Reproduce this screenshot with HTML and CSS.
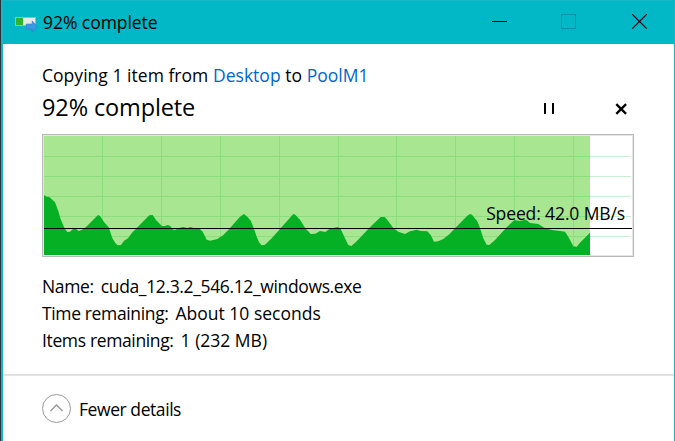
FILE: index.html
```
<!DOCTYPE html>
<html lang="en">
<head>
<meta charset="utf-8">
<title>92% complete</title>
<link rel="stylesheet" href="styles.css">
</head>
<body>
<div class="window">
  <header class="titlebar">
    <svg class="app-icon" width="23" height="18" viewBox="0 0 23 18">
      <rect x=".5" y="2.500" width="20" height="8" fill="#e8e8e8" stroke="#a9b5b5"/>
      <rect x="1" y="3" width="7" height="7" fill="#2db52e"/>
      <path d="M11.300 9h5.900V6l5.500 5.700-5.500 5.700V14h-5.900z" fill="#3c96e4" stroke="#2c80d2" stroke-width=".6"/>
    </svg>
    <span class="title">92% complete</span>
    <svg class="controls" width="156" height="16" viewBox="0 0 156 16" fill="none" stroke="#000">
      <path d="M0 7.500h15"/>
      <rect x="69.500" y=".5" width="14" height="14" stroke="#0094a3"/>
      <path d="M140.300.300l14.400 14.400M154.700.300l-14.400 14.400" stroke-width="1.150"/>
    </svg>
  </header>
  <main class="body">
    <p class="source">Copying 1 item from <a>Desktop</a> to <a>PoolM1</a></p>
    <div class="status">
      <h1>92% complete</h1>
      <svg class="actions" width="83" height="12" viewBox="0 0 83 12" stroke="#000" fill="none">
        <path d="M1 0v11M9 0v11" stroke-width="2"/>
        <path d="M72.300 1.100l9.800 9.800M82.100 1.100l-9.800 9.800" stroke-width="2.300"/>
      </svg>
    </div>
    <div class="chart">
      <svg width="588" height="119" viewBox="44 136 588 119">
        <path d="M590 156.500h41M590 176.500h41M590 196.500h41M590 216.500h41M590 236.500h41" stroke="#c9f0d3"/>
        <rect x="44" y="136" width="546" height="119" fill="#a8e692"/>
        <path d="M44 156.500h546M44 176.500h546M44 196.500h546M44 216.500h546M44 236.500h546M102.500 136v119M161.500 136v119M220.500 136v119M279.500 136v119M338.500 136v119M396.500 136v119M455.500 136v119M514.500 136v119M573.500 136v119" stroke="#8ade7c"/>
        <path fill="#06b025" d="M44 255V195L46.700 196.700 49.300 197 55 202.300 58.300 211 60.700 219.300 64.300 227.700 67.300 232 70 231.700 72.700 229.300 76 228.700 78.700 231 82 229.700 86 227 98 215 100 216 104 222 108.700 227.300 112.300 238 115.300 243 117.700 245.300 121 245 124 240.700 128 238.300 132 232.700 136.700 228 149.300 215.300 152.700 215 156 220 162 226 165 226 167.300 225 170 225.700 173.300 229.700 175.700 229.700 178 228.300 183.300 227 187.300 228 190.700 227 194 228.300 200 229 202.700 231.700 206.700 239.700 210 240.700 217.300 239 223.300 235 228.300 230 240 216.700 244 214 247.300 216.700 250.700 220.700 253.300 226.700 256.700 236.700 259.300 242.700 261.700 245.300 265 244.700 271.700 238.300 280 229 293.300 214 295.300 214.700 300 219.700 305 227.700 310.700 234 315.300 233.700 320 231 325.300 232 329.300 229 337.700 227 340.700 229 345 238.300 348.300 245 351.300 246 356.700 241.300 370 227.300 380.700 217 384.700 217 388 220.700 393.300 228 398.300 231.700 405 234 410 231.300 416.700 229.700 420.700 231 427.300 231.300 430.700 235 434 241.700 438 241.300 443.300 239 449.300 234.300 455.300 228 467.300 215.700 470 214 472 214.700 477.300 221.300 480 228 483.300 238.300 486.700 244.700 489.300 245 495 240 506.700 227.300 514.300 220 519.300 221 526 219.700 530 223 538.300 224 545 228.300 553.300 230.300 558.300 230.700 565 231.700 568.300 236.700 573.300 246.300 576.700 246.700 580 242.700 590 232.700V255z"/>
        <path d="M44 228.500h588" stroke="#000"/>
      </svg>
      <span class="speed">Speed: 42.0 MB/s</span>
    </div>
    <dl class="details">
      <div><dt>Name:</dt><dd class="file">cuda_12.3.2_546.12_windows.exe</dd></div>
      <div><dt>Time remaining:</dt><dd>About 10 seconds</dd></div>
      <div><dt>Items remaining:</dt><dd>1 (232 MB)</dd></div>
    </dl>
  </main>
  <footer class="footer">
    <svg width="30" height="30" viewBox="0 0 30 30" fill="none" stroke="#999">
      <circle cx="14.500" cy="14.500" r="14"/>
      <path d="M8.500 17l6-6 6 6" stroke-width="1.500"/>
    </svg>
    <span class="toggle">Fewer details</span>
  </footer>
</div>
</body>
</html>
```
FILE: styles.css
```
* { box-sizing: border-box; margin: 0; padding: 0; }
body {
  width: 675px;
  height: 441px;
  overflow: hidden;
  background: #26343b;
  font: 17.5px/27px "Open Sans", "Noto Sans", sans-serif;
  color: #000;
}
.window {
  height: 441px;
  margin-left: 1px;
  border-left: 2px solid #18b6c4;
  border-right: 1px solid #18b6c4;
  background: #fff;
}
.titlebar {
  display: flex;
  align-items: center;
  height: 44px;
  padding-left: 12px;
  background: #02b7c6;
  border-top: 1px solid #18b6c4;
}
.app-icon { margin-top: 3px; }
.title { margin-left: 5px; letter-spacing: -0.05px; }
.controls { margin-left: auto; margin-right: 26px; margin-top: -1px; }
.body { padding: 18px 40px 0 39px; }
.source { white-space: nowrap; letter-spacing: 0.03px; }
.source a { color: #0066cc; }
.status {
  display: flex;
  align-items: center;
  height: 36px;
  padding-right: 7px;
}
.status h1 { font-size: 23.5px; font-weight: 400; letter-spacing: -0.12px; }
.actions { margin-left: auto; margin-top: 4px; }
.chart {
  position: relative;
  width: 592px;
  height: 123px;
  margin-top: 9px;
  border: 1px solid #b9b9b9;
  padding: 1px;
  background: #e6e6e6;
}
.chart svg { display: block; background: #fff; }
.speed { position: absolute; right: 8px; top: 65px; letter-spacing: -0.12px; }
.details { margin-top: 16px; }
.details div { display: flex; gap: 7px; }
.details dt { letter-spacing: -0.36px; }
.details .file { letter-spacing: -0.36px; }
.footer {
  display: flex;
  align-items: center;
  gap: 7px;
  height: 67px;
  margin-top: 20px;
  padding-left: 39px;
  border-top: 2px solid #e1e1e1;
}
.toggle { padding-top: 1px; letter-spacing: -0.43px; }
```
